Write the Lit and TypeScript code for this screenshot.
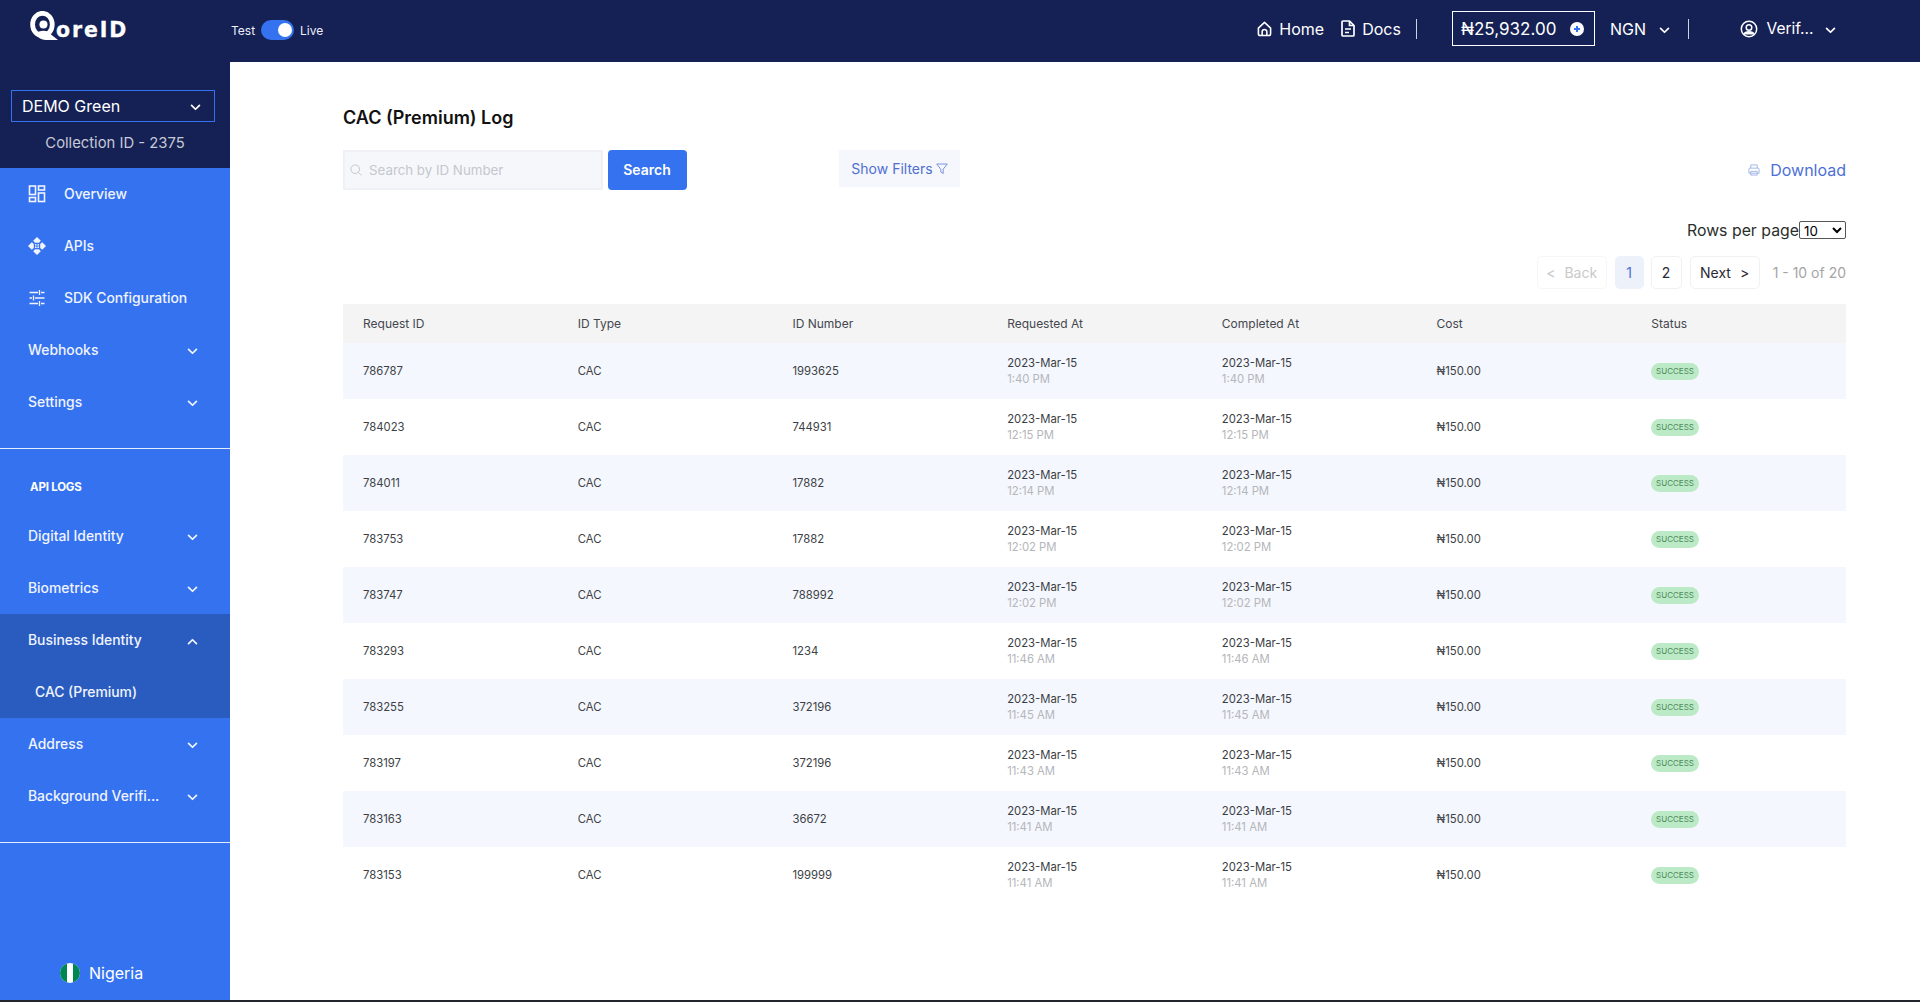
import { LitElement, html, css, svg } from "lit";
import { customElement } from "lit/decorators.js";

const chevDown = html`<svg class="chev" width="11" height="7" viewBox="0 0 12 8" fill="none"><path d="M1.5 1.5 6 6l4.5-4.5" stroke="currentColor" stroke-width="2" stroke-linecap="round" stroke-linejoin="round"/></svg>`;
const chevUp = html`<svg class="chev" width="11" height="7" viewBox="0 0 12 8" fill="none"><path d="M1.5 6.5 6 2l4.5 4.5" stroke="currentColor" stroke-width="2" stroke-linecap="round" stroke-linejoin="round"/></svg>`;

const rows: [string, string, string][] = [
  ["786787", "1993625", "1:40 PM"],
  ["784023", "744931", "12:15 PM"],
  ["784011", "17882", "12:14 PM"],
  ["783753", "17882", "12:02 PM"],
  ["783747", "788992", "12:02 PM"],
  ["783293", "1234", "11:46 AM"],
  ["783255", "372196", "11:45 AM"],
  ["783197", "372196", "11:43 AM"],
  ["783163", "36672", "11:41 AM"],
  ["783153", "199999", "11:41 AM"],
];

const iconOverview = svg`<rect x="1.5" y="1" width="6" height="8.5" stroke="currentColor" stroke-width="1.6" fill="none"/><rect x="10.5" y="1" width="6" height="4" stroke="currentColor" stroke-width="1.6" fill="none"/><rect x="1.5" y="12.5" width="6" height="4" stroke="currentColor" stroke-width="1.6" fill="none"/><rect x="10.5" y="8" width="6" height="8.5" stroke="currentColor" stroke-width="1.6" fill="none"/>`;
const iconApis = svg`<path d="M9 0 12.8 3.8 11 5.8H7L5.2 3.8zM9 18 5.2 14.2 7 12.2h4l1.8 2zM0 9 3.8 5.2 5.8 7v4l-2 1.8zM18 9l-3.8-3.8-2 1.8v4l2 1.8z" fill="currentColor"/><circle cx="7.8" cy="7.8" r=".9" fill="currentColor"/><circle cx="10.2" cy="7.8" r=".9" fill="currentColor"/><circle cx="7.8" cy="10.2" r=".9" fill="currentColor"/><circle cx="10.2" cy="10.2" r=".9" fill="currentColor"/>`;
const iconSdk = svg`<path d="M1.5 3.5h8.5M13 3.5h3.5M11.5 1v5M1.5 9H4M7 9h9.5M5.5 6.5v5M1.5 14.5h8.5M13 14.5h3.5M11.5 12v5" stroke="currentColor" stroke-width="1.3" fill="none"/>`;

@customElement("app-root")
export class AppRoot extends LitElement {
  static styles = css`
    :host {
      display: flex;
      flex-direction: column;
      height: 1002px;
      box-sizing: border-box;
      border-bottom: 2px solid #22252b;
      font-family: Inter, "Noto Sans", sans-serif;
      color: #222;
      background: #fff;
      overflow: hidden;
    }
    .top {
      height: 62px;
      flex: none;
      background: #152154;
      color: #fff;
      display: flex;
      align-items: center;
      position: relative;
    }
    .brand {
      width: 231px;
      flex: none;
      padding-left: 30px;
      box-sizing: border-box;
      display: flex;
      align-items: flex-start;
      padding-top: 11px;
      height: 62px;
    }
    .logo { display: flex; align-items: flex-start; }
    .logo svg { flex: none; }
    .logo span {
      font-family: "DejaVu Sans", sans-serif;
      font-size: 20.5px;
      font-weight: 700;
      line-height: 24px;
      margin: 7px 0 0 -3px;
      letter-spacing: 1.9px;
      -webkit-text-stroke: .3px #fff;
    }
    .mode { display: flex; align-items: center; font-size: 12px; gap: 6px; margin-top: -2px; color: #eef; }
    .toggle {
      width: 33px;
      height: 20px;
      border-radius: 10px;
      background: #3572ef;
      position: relative;
    }
    .toggle::after {
      content: "";
      position: absolute;
      right: 2px;
      top: 3px;
      width: 14px;
      height: 14px;
      border-radius: 50%;
      background: #fff;
    }
    .topright {
      margin-left: auto;
      display: flex;
      align-items: center;
      font-size: 16px;
      margin-top: -5px;
      padding-right: 84.5px;
    }
    .tl { display: flex; align-items: center; gap: 7px; }
    .tl.docs { margin-left: 17px; }
    .vsep { width: 1px; height: 20px; background: #cfd3e0; }
    .sep1 { margin-left: 15px; }
    .balance {
      border: 1px solid #fff;
      height: 35px;
      width: 143px;
      box-sizing: border-box;
      display: flex;
      align-items: center;
      justify-content: space-between;
      padding: 0 10px 0 8px;
      margin-left: 35px;
      font-size: 17px;
    }
    .plus {
      width: 14px;
      height: 14px;
      border-radius: 50%;
      background: #fff;
      color: #3572ef;
      display: flex;
    }
    .ngn { display: flex; align-items: center; gap: 13px; margin-left: 15px; margin-right: 18.5px; }
    .user { display: flex; align-items: center; margin-left: 51px; gap: 8px; font-size: 15.5px; }
    .user .chev { margin-left: 3px; margin-top: 3px; }
    .ngn .chev { margin-top: 3px; }

    .body { flex: 1; display: flex; min-height: 0; }
    aside {
      width: 230px;
      flex: none;
      background: #3572ef;
      color: #fff;
      display: flex;
      flex-direction: column;
      font-size: 13.9px;
      font-weight: 500;
    }
    .org {
      background: #152154;
      border-top: 1px solid #6b7185;
      margin-top: -1px;
      height: 107px;
      flex: none;
      box-sizing: border-box;
      padding: 28px 11px 0;
    }
    .orgsel {
      border: 1px solid #3572ef;
      height: 32px;
      width: 204px;
      box-sizing: border-box;
      display: flex;
      align-items: center;
      justify-content: space-between;
      padding: 0 13px 0 10px;
      font-size: 16px;
      font-weight: 400;
    }
    .orgsel .chev { margin-top: 3px; }
    .coll {
      font-size: 14.8px;
      font-weight: 400;
      color: #c6c9d6;
      text-align: center;
      width: 208px;
      margin-top: 9px;
      line-height: 24px;
    }
    .item {
      height: 52px;
      display: flex;
      align-items: center;
      padding: 0 32px 0 28px;
      flex: none;
      color: #f0f4ff;
    }
    .item svg.ic { width: 18px; height: 18px; margin-right: 18px; flex: none; margin-top: 1px; }
    .item .chev { margin-left: auto; margin-top: 2px; }
    .item.ictext { padding-bottom: 1px; box-sizing: border-box; }
    .line { height: 1px; background: #e6edff; flex: none; }
    .nav1 { height: 280px; flex: none; }
    .head {
      height: 36px;
      margin-top: 20px;
      padding-left: 30px;
      display: flex;
      align-items: center;
      font-size: 11.5px;
      font-weight: 700;
      letter-spacing: -.2px;
      flex: none;
    }
    .nav2 { flex: none; height: 332px; margin-top: 5px; }
    .open { background: #2a5cc0; }
    .sub { padding-left: 35px; }
    .country {
      margin-top: auto;
      height: 54px;
      display: flex;
      align-items: center;
      gap: 9px;
      padding-left: 60px;
      font-size: 16px;
      font-weight: 400;
      box-sizing: border-box;
    }
    .flag { width: 20px; height: 20px; border-radius: 50%; flex: none; display: block; }

    main { flex: 1; min-width: 0; padding: 0 74px 0 113px; }
    h1 {
      margin: 44px 0 0;
      font-size: 18px;
      line-height: 24px;
      font-weight: 600;
      color: #111;
    }
    .tools { display: flex; margin-top: 20px; height: 40px; }
    .search {
      width: 259.5px;
      height: 40px;
      box-sizing: border-box;
      background: #f6f7fb;
      border: 2px solid #eff1f6;
      display: flex;
      align-items: center;
      padding: 0 0 1px 5px;
      gap: 7px;
      color: #c4c7ce;
      font-size: 13.3px;
    }
    .go {
      width: 79px;
      height: 40px;
      margin-left: 5px;
      padding-bottom: 1px;
      box-sizing: border-box;
      background: #3572ef;
      color: #fff;
      border-radius: 4px;
      font-size: 14px;
      font-weight: 600;
      display: flex;
      align-items: center;
      justify-content: center;
    }
    .filters {
      margin-left: 152.5px;
      width: 121px;
      height: 37px;
      background: #f5f7fc;
      color: #4f6fd0;
      font-size: 14px;
      display: flex;
      align-items: center;
      justify-content: center;
      gap: 3px;
    }
    .dl {
      margin-left: auto;
      display: flex;
      align-items: center;
      color: #4d6fd6;
      font-size: 16px;
      gap: 10px;
      height: 40px;
    }
    .rpp {
      display: flex;
      justify-content: flex-end;
      align-items: center;
      margin-top: 31px;
      height: 18px;
      font-size: 15.85px;
      color: #2b2f2b;
    }
    .rpp select {
      width: 47px;
      height: 18px;
      font-size: 13.33px;
      font-family: Inter, sans-serif;
      background: #fff;
      border: 1px solid #555;
      border-radius: 2px;
      padding: 0;
      color: #000;
    }
    .pager {
      display: flex;
      justify-content: flex-end;
      align-items: center;
      margin-top: 17px;
      height: 33px;
      font-size: 14px;
    }
    .pg {
      height: 33px;
      box-sizing: border-box;
      border: 1px solid #f0f1f4;
      border-radius: 5px;
      display: flex;
      align-items: center;
      justify-content: center;
      color: #2d2836;
    }
    .back { width: 70px; color: #c9c9c9; gap: 9px; border-color: #f6f6f6; }
    .p1 { width: 29px; margin-left: 8px; background: #edf1fa; color: #4d6fd6; border-color: #edf1fa; }
    .p2 { width: 31px; margin-left: 7px; }
    .next { width: 70px; margin-left: 8px; gap: 9px; }
    .count { margin-left: 13px; color: #a5a5a5; }

    .table { margin-top: 15px; }
    .tr { display: grid; grid-template-columns: repeat(7, 1fr); align-items: center; }
    .th { height: 39px; background: #f4f4f4; font-size: 12px; color: #44474f; }
    .row { height: 56px; font-size: 11.3px; color: #3c3f45; }
    .row:nth-child(odd) { background: #f4f7fd; }
    .c { padding-left: 20px; line-height: 16px; }
    .t { color: #b4b6ba; }
    .d { color: #3b3d42; }
    .badge {
      display: inline-block;
      width: 47.5px;
      height: 17px;
      line-height: 17px;
      border-radius: 9px;
      background: #bdeac6;
      color: #4c8a5c;
      font-size: 8px;
      text-align: center;
      vertical-align: middle;
    }
  `;

  render() {
    return html`
      <div class="top">
        <div class="brand">
          <div class="logo">
            <svg width="29" height="30" viewBox="0 0 28 29"><ellipse cx="12" cy="13" rx="9.5" ry="10.8" fill="none" stroke="#fff" stroke-width="4.6"/><circle cx="13" cy="13" r="3.9" fill="#fff"/><path d="M6 22.5c2-4.5 12-4.5 14 0l7 5.5H15c-4 0-7-2-9-5.5z" fill="#fff"/></svg>
            <span>oreID</span>
          </div>
        </div>
        <div class="mode"><span>Test</span><span class="toggle"></span><span>Live</span></div>
        <div class="topright">
          <span class="tl">
            <svg width="15" height="16" viewBox="0 0 16 17" fill="none" stroke="#fff" stroke-width="1.7"><path d="M1.5 7.5 8 1.5l6.5 6v6a2 2 0 0 1-2 2h-9a2 2 0 0 1-2-2z" stroke-linejoin="round"/><path d="M5.5 15.5V11.5a2.5 2.5 0 0 1 5 0v4"/></svg>
            Home
          </span>
          <span class="tl docs">
            <svg width="14" height="17" viewBox="0 0 14 17" fill="none" stroke="#fff" stroke-width="1.7"><path d="M1 2a1 1 0 0 1 1-1h6.5L13 5.5V15a1 1 0 0 1-1 1H2a1 1 0 0 1-1-1z" stroke-linejoin="round"/><path d="M8.5 1v4.5H13M4 9h6M4 12.5h4"/></svg>
            Docs
          </span>
          <span class="vsep sep1"></span>
          <span class="balance">
            ₦25,932.00
            <span class="plus"><svg width="14" height="14" viewBox="0 0 14 14"><path d="M7 4v6M4 7h6" stroke="currentColor" stroke-width="2"/></svg></span>
          </span>
          <span class="ngn">NGN ${chevDown}</span>
          <span class="vsep"></span>
          <span class="user">
            <svg width="18" height="18" viewBox="0 0 18 18" fill="none" stroke="#fff" stroke-width="1.5"><circle cx="9" cy="9" r="7.7"/><circle cx="9" cy="7.5" r="2.8"/><path d="M3.8 14.5c1.5-3.6 8.9-3.6 10.4 0" fill="#fff"/></svg>
            Verif... ${chevDown}
          </span>
        </div>
      </div>
      <div class="body">
        <aside>
          <div class="org">
            <div class="orgsel">DEMO Green ${chevDown}</div>
            <div class="coll">Collection ID - 2375</div>
          </div>
          <div class="nav1">
            <div class="item ictext"><svg class="ic" viewBox="0 0 18 18">${iconOverview}</svg>Overview</div>
            <div class="item ictext"><svg class="ic" viewBox="0 0 18 18">${iconApis}</svg>APIs</div>
            <div class="item ictext"><svg class="ic" viewBox="0 0 18 18">${iconSdk}</svg>SDK Configuration</div>
            <div class="item">Webhooks ${chevDown}</div>
            <div class="item">Settings ${chevDown}</div>
          </div>
          <div class="line"></div>
          <div class="head">API LOGS</div>
          <div class="nav2">
            <div class="item">Digital Identity ${chevDown}</div>
            <div class="item">Biometrics ${chevDown}</div>
            <div class="open">
              <div class="item">Business Identity ${chevUp}</div>
              <div class="item sub">CAC (Premium)</div>
            </div>
            <div class="item">Address ${chevDown}</div>
            <div class="item">Background Verifi... ${chevDown}</div>
          </div>
          <div class="line"></div>
          <div class="country">
            <svg class="flag" viewBox="0 0 20 20"><rect width="20" height="20" fill="#fff"/><rect width="7" height="20" fill="#008751"/><rect x="13" width="7" height="20" fill="#008751"/></svg>
            Nigeria
          </div>
        </aside>
        <main>
          <h1>CAC (Premium) Log</h1>
          <div class="tools">
            <div class="search">
              <svg width="12" height="12" viewBox="0 0 12 12" fill="none" stroke="#c4c7ce"><circle cx="5.2" cy="5.2" r="4.3"/><path d="m8.4 8.4 3 3"/></svg>
              Search by ID Number
            </div>
            <div class="go">Search</div>
            <div class="filters">
              Show Filters
              <svg width="12" height="12" viewBox="0 0 12 12" fill="none" stroke="#7d93da"><path d="M.7 1h10.6L7.2 6.2v4.3L4.8 9V6.2z" stroke-linejoin="round"/></svg>
            </div>
            <div class="dl">
              <svg width="12" height="12" viewBox="0 0 13 13" fill="none" stroke="#9fb2e6"><path d="M3 4.5V1h7v3.5M1 10V5.5A1 1 0 0 1 2 4.5h9a1 1 0 0 1 1 1V10H1zM3 8h7v4H3z"/></svg>
              Download
            </div>
          </div>
          <div class="rpp">
            <span>Rows per page</span>
            <select><option>10</option></select>
          </div>
          <div class="pager">
            <div class="pg back"><span>&lt;</span><span>Back</span></div>
            <div class="pg p1">1</div>
            <div class="pg p2">2</div>
            <div class="pg next"><span>Next</span><span>&gt;</span></div>
            <div class="count">1 - 10 of 20</div>
          </div>
          <div class="table">
            <div class="tr th">
              <div class="c">Request ID</div><div class="c">ID Type</div><div class="c">ID Number</div>
              <div class="c">Requested At</div><div class="c">Completed At</div><div class="c">Cost</div><div class="c">Status</div>
            </div>
            <div>
              ${rows.map(
                ([id, num, time]) => html`
                  <div class="tr row">
                    <div class="c">${id}</div>
                    <div class="c">CAC</div>
                    <div class="c">${num}</div>
                    <div class="c"><div class="d">2023-Mar-15</div><div class="t">${time}</div></div>
                    <div class="c"><div class="d">2023-Mar-15</div><div class="t">${time}</div></div>
                    <div class="c">₦150.00</div>
                    <div class="c"><span class="badge">SUCCESS</span></div>
                  </div>
                `
              )}
            </div>
          </div>
        </main>
      </div>
    `;
  }
}
